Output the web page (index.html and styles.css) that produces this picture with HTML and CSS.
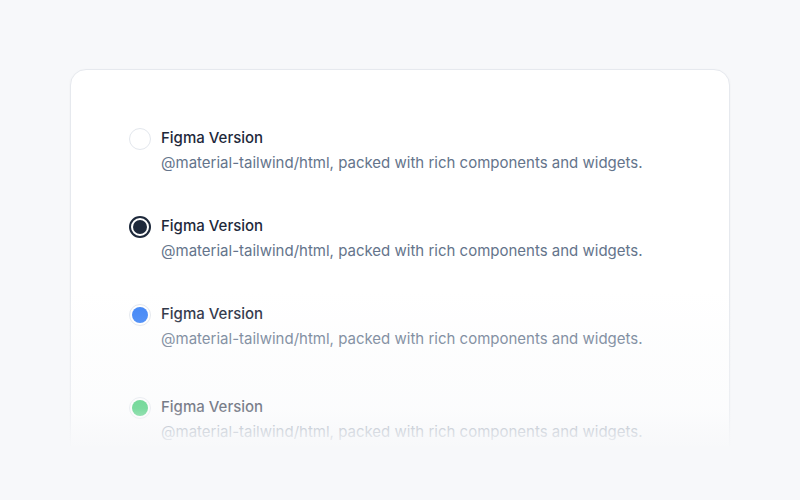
FILE: index.html
```html
<!DOCTYPE html>
<html lang="en">
<head>
<meta charset="utf-8">
<title>Radio list</title>
<link rel="stylesheet" href="styles.css">
</head>
<body>
<div class="stage">
  <div class="card">
    <div class="option">
      <span class="radio"></span>
      <div class="text">
        <div class="title">Figma Version</div>
        <div class="desc">@material-tailwind/html, packed with rich components and widgets.</div>
      </div>
    </div>
    <div class="option">
      <span class="radio radio-dark"><span class="dot"></span></span>
      <div class="text">
        <div class="title">Figma Version</div>
        <div class="desc">@material-tailwind/html, packed with rich components and widgets.</div>
      </div>
    </div>
    <div class="option">
      <span class="radio"><span class="dot dot-blue"></span></span>
      <div class="text">
        <div class="title">Figma Version</div>
        <div class="desc">@material-tailwind/html, packed with rich components and widgets.</div>
      </div>
    </div>
    <div class="option option-last">
      <span class="radio"><span class="dot dot-green"></span></span>
      <div class="text">
        <div class="title">Figma Version</div>
        <div class="desc">@material-tailwind/html, packed with rich components and widgets.</div>
      </div>
    </div>
  </div>
  <div class="fade"></div>
</div>
</body>
</html>
```
FILE: styles.css
```css
* { box-sizing: border-box; }
html, body { margin: 0; padding: 0; }
body {
  width: 800px;
  height: 500px;
  overflow: hidden;
  background: #f7f8fa;
  font-family: Inter, "Noto Sans", sans-serif;
}
.stage {
  position: relative;
  width: 662px;
  height: 378px;
  margin: 68px auto 0;
  padding: 1px;
  overflow: hidden;
}
.card {
  width: 660px;
  height: 460px;
  background: #ffffff;
  border: 1px solid #e6e9ee;
  border-radius: 16px;
  box-shadow: 0 1px 3px rgba(15, 23, 42, 0.04);
  padding: 57px 0 0 58px;
  display: flex;
  flex-direction: column;
  gap: 38px;
}
.option {
  display: flex;
  align-items: flex-start;
  gap: 10px;
  height: 50px;
}
.option-last { margin-top: 5px; }
.radio {
  width: 22px;
  height: 22px;
  margin-top: 1px;
  border-radius: 50%;
  border: 1px solid #e3e7ed;
  background: #fff;
  display: flex;
  align-items: center;
  justify-content: center;
  flex: none;
}
.radio-dark { border: 2px solid #1e293b; }
.dot {
  width: 14px;
  height: 14px;
  border-radius: 50%;
  background: #1e293b;
}
.dot-blue { width: 16px; height: 16px; background: #3b82f6; }
.dot-green { width: 16px; height: 16px; background: #22c55e; }
.title {
  font-size: 15px;
  line-height: 22px;
  font-weight: 500;
  color: #1e293b;
}
.desc {
  font-size: 15px;
  line-height: 28px;
  color: #64748b;
}
.fade {
  position: absolute;
  left: 0;
  right: 0;
  bottom: 0;
  height: 156px;
  background: linear-gradient(to bottom,
    rgba(247, 248, 250, 0) 0%,
    rgba(247, 248, 250, 0.1) 16%,
    rgba(247, 248, 250, 0.22) 31%,
    rgba(247, 248, 250, 0.42) 76%,
    rgba(247, 248, 250, 0.78) 91%,
    rgba(247, 248, 250, 0.95) 100%);
}
```
